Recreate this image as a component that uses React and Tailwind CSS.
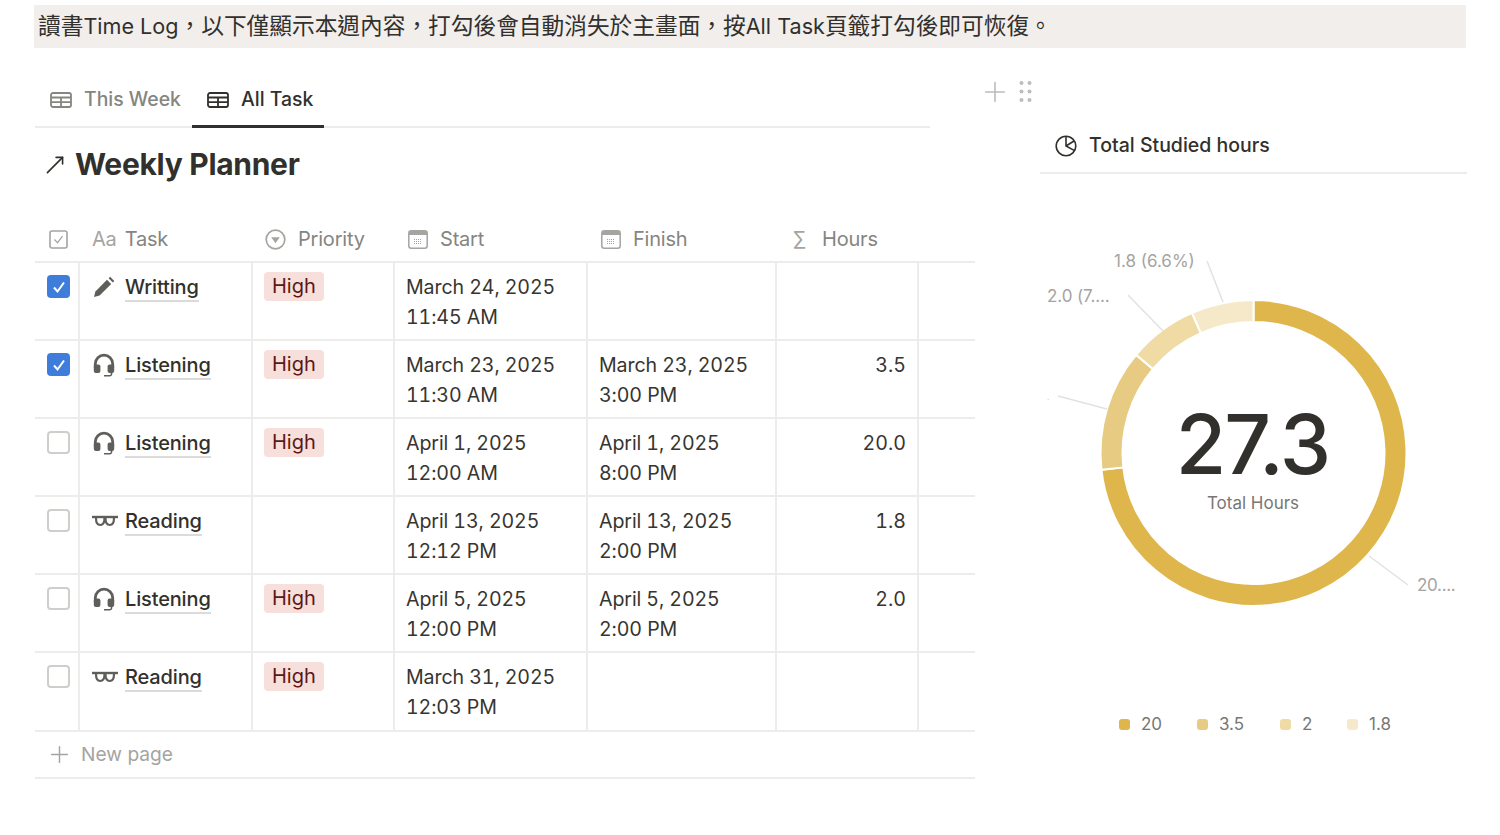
import { Plus, MoveUpRight } from "lucide-react";

const rows = [
  { done: true, icon: "pencil", task: "Writting", high: true, start: ["March 24, 2025", "11:45 AM"], finish: null, hours: "" },
  { done: true, icon: "headphones", task: "Listening", high: true, start: ["March 23, 2025", "11:30 AM"], finish: ["March 23, 2025", "3:00 PM"], hours: "3.5" },
  { done: false, icon: "headphones", task: "Listening", high: true, start: ["April 1, 2025", "12:00 AM"], finish: ["April 1, 2025", "8:00 PM"], hours: "20.0" },
  { done: false, icon: "glasses", task: "Reading", high: false, start: ["April 13, 2025", "12:12 PM"], finish: ["April 13, 2025", "2:00 PM"], hours: "1.8" },
  { done: false, icon: "headphones", task: "Listening", high: true, start: ["April 5, 2025", "12:00 PM"], finish: ["April 5, 2025", "2:00 PM"], hours: "2.0" },
  { done: false, icon: "glasses", task: "Reading", high: true, start: ["March 31, 2025", "12:03 PM"], finish: null, hours: "" },
];

const legend = [
  { label: "20", color: "bg-[#dfb64b]", width: "w-[78px]" },
  { label: "3.5", color: "bg-[#e8cb82]", width: "w-[83px]" },
  { label: "2", color: "bg-[#f0dba5]", width: "w-[67px]" },
  { label: "1.8", color: "bg-[#f6e9c9]", width: "w-[45px]" },
];

const TableIcon = ({ className }) => (
  <svg viewBox="0 0 22 16" className={className} fill="none" stroke="currentColor" strokeWidth="1.8">
    <rect x="1" y="1" width="20" height="14" rx="2" />
    <path d="M1 5.5h20M1 10.2h20M11 5.5V15" />
  </svg>
);

const CalendarIcon = () => (
  <svg viewBox="0 0 20 19" className="w-[20px] h-[19px]">
    <rect x="0.8" y="0.8" width="18.4" height="17.4" rx="2.5" fill="#fff" stroke="#a5a4a1" strokeWidth="1.5" />
    <path d="M1 3.2a2.2 2.2 0 0 1 2.2-2.2h13.6a2.2 2.2 0 0 1 2.2 2.2V5H1z" fill="#a5a4a1" />
    <path d="M6 9.5h8M6 11.5h8M6 13.5h8" stroke="#a5a4a1" strokeWidth="1" strokeDasharray="1 1" />
  </svg>
);

const TaskIcon = ({ name }) => {
  if (name === "pencil") {
    return (
      <svg viewBox="0 0 22 22" className="w-[22px] h-[22px] text-[#5f5e5b]" fill="currentColor">
        <path d="M1 21l1.4-5.6L14 3.8l4.2 4.2L6.6 19.6z" />
        <path d="M15.6 2.2l1.5-1.5 4.2 4.2-1.5 1.5z" />
      </svg>
    );
  }
  if (name === "headphones") {
    return (
      <svg viewBox="0 0 22 24" className="w-[22px] h-[24px] text-[#5f5e5b]" fill="none">
        <path d="M2.3 15v-4.2a8.7 8.7 0 0 1 17.4 0V15" stroke="currentColor" strokeWidth="2.8" />
        <rect x="0.8" y="11.5" width="6.6" height="8.5" rx="2" fill="currentColor" />
        <rect x="14.6" y="11.5" width="6.6" height="8.5" rx="2" fill="currentColor" />
        <path d="M18.5 19.5v1.5a1.8 1.8 0 0 1-1.8 1.8H11" stroke="currentColor" strokeWidth="1.6" />
      </svg>
    );
  }
  return (
    <svg viewBox="0 0 26 12" className="-ml-[1px] w-[26px] h-[12px] text-[#5f5e5b]" fill="none" stroke="currentColor">
      <path d="M0 2h26" strokeWidth="2.4" />
      <path d="M4 3c0 4 1.2 7 4.2 7s4.3-3 4.3-7M13.5 3c0 4 1.3 7 4.3 7s4.2-3 4.2-7" strokeWidth="2.2" />
    </svg>
  );
};

const Checkbox = ({ checked }) =>
  checked ? (
    <div className="w-[23px] h-[23px] rounded-[4px] bg-[#3f7ddb] flex items-center justify-center">
      <svg viewBox="0 0 14 14" className="w-[14px] h-[14px]" fill="none" stroke="#fff" strokeWidth="2">
        <path d="M2 7.5l3.5 4L12 2.5" />
      </svg>
    </div>
  ) : (
    <div className="w-[23px] h-[23px] rounded-[4px] border-2 border-[#cfcecb] bg-white" />
  );

const HeaderCell = ({ icon, label, className }) => (
  <div className={`flex items-center text-[20px] tracking-[-0.2px] text-[#86857f] ${className}`}>
    {icon}
    <span>{label}</span>
  </div>
);

const DateCell = ({ lines, className }) => (
  <div className={`pl-[11px] pt-[9px] text-[19.6px] leading-[30px] tabular-nums tracking-[-0.1px] text-[#37352f] border-r-2 border-[#ececea] ${className}`}>
    {lines && lines.map((line) => <div key={line}>{line}</div>)}
  </div>
);

function polar(r, deg) {
  const a = ((deg - 90) * Math.PI) / 180;
  return [1253.5 + r * Math.cos(a), 453 + r * Math.sin(a)];
}

function arc(from, to) {
  const [x1, y1] = polar(153, from);
  const [x2, y2] = polar(153, to);
  const [x3, y3] = polar(131, to);
  const [x4, y4] = polar(131, from);
  const large = to - from > 180 ? 1 : 0;
  return `M${x1} ${y1}A153 153 0 ${large} 1 ${x2} ${y2}L${x3} ${y3}A131 131 0 ${large} 0 ${x4} ${y4}Z`;
}

const Donut = () => (
  <svg viewBox="1040 174 427 530" className="w-[427px] h-[530px]">
    <path d={arc(0, 263.7)} fill="#dfb64b" stroke="#fff" strokeWidth="2" />
    <path d={arc(263.7, 309.9)} fill="#e8cb82" stroke="#fff" strokeWidth="2" />
    <path d={arc(309.9, 336.3)} fill="#f0dba5" stroke="#fff" strokeWidth="2" />
    <path d={arc(336.3, 360)} fill="#f6e9c9" stroke="#fff" strokeWidth="2" />
    <path d="M1369 556l39 29M1107 409l-49-13M1163 331l-35-36M1223 302l-16-41" stroke="#e3e2e0" strokeWidth="1.5" fill="none" />
    <text x="1417" y="591" fontSize="17" letterSpacing="-0.3" fill="#a5a4a1">20....</text>
    <text x="1047" y="302" fontSize="17" letterSpacing="-0.1" fill="#a5a4a1">2.0 (7....</text>
    <text x="1047" y="400" fontSize="8" fill="#c9c8c5">.</text>
    <text x="1114" y="267" fontSize="17" fill="#a5a4a1">1.8 (6.6%)</text>
    <text x="1252.5" y="474" fontSize="82" fontWeight="500" fill="#32302c" textAnchor="middle" letterSpacing="-2">27.3</text>
    <text x="1253" y="509" fontSize="17" fill="#787774" textAnchor="middle">Total Hours</text>
  </svg>
);

export default function App() {
  return (
    <div className="w-[1500px] h-[835px] overflow-hidden bg-white pt-[5px] font-['Inter','Noto_Sans_CJK_TC',sans-serif] text-[#37352f]">
      <div className="mx-[34px] h-[43px] bg-[#f1eeec] pl-[4px] flex items-center text-[22.7px] text-[#32302c] whitespace-nowrap">
        <p>
          讀書<span className="text-[21.6px]">Time Log</span>
          {"\uFF0C以下僅顯示本週內容\uFF0C打勾後會自動消失於主畫面\uFF0C按"}
          <span className="text-[21.6px]">All Task</span>
          頁籤打勾後即可恢復。
        </p>
      </div>

      <div className="flex pl-[35px]">
        <div className="w-[940px]">
          <div className="w-[895px] mt-[24px] h-[56px] flex border-b-2 border-[#ececea] text-[19.4px] font-medium">
            <div className="w-[157px] pl-[15px] pt-[2px] flex items-center gap-[12px] text-[#86857f]">
              <TableIcon className="w-[22px] h-[16px]" />
              <span>This Week</span>
            </div>
            <div className="w-[132px] h-[56px] pl-[15px] pt-[2px] flex items-center gap-[12px] text-[#32302c] border-b-[3px] border-[#32302c]">
              <TableIcon className="w-[22px] h-[16px]" />
              <span>All Task</span>
            </div>
          </div>

          <div className="h-[73px] flex items-center pl-[7px] gap-[7px]">
            <MoveUpRight size={26} strokeWidth={1.5} className="text-[#32302c]" />
            <h1 className="text-[30px] font-bold text-[#32302c] tracking-[-0.3px]">Weekly Planner</h1>
          </div>

          <div className="h-[46px] mt-[16px] flex border-b-2 border-[#ececea]">
            <div className="w-[45px] flex items-center pl-[14px]">
              <svg viewBox="0 0 19 19" className="w-[19px] h-[19px]" fill="none" stroke="#a5a4a1">
                <rect x="1" y="1" width="17" height="17" rx="2" strokeWidth="1.6" />
                <path d="M5.5 9.5l3 3.2 5-6.5" strokeWidth="1.2" />
              </svg>
            </div>
            <HeaderCell
              className="w-[173px]"
              icon={<span className="text-[#a5a4a1] ml-[12px] mr-[8px]">Aa</span>}
              label="Task"
            />
            <HeaderCell
              className="w-[142px] pl-[12px] gap-[12px]"
              icon={
                <svg viewBox="0 0 21 21" className="w-[21px] h-[21px]" fill="none">
                  <circle cx="10.5" cy="10.5" r="9.3" stroke="#a5a4a1" strokeWidth="1.7" />
                  <path d="M6.2 8.2h8.6l-4.3 6z" fill="#a5a4a1" />
                </svg>
              }
              label="Priority"
            />
            <HeaderCell className="w-[193px] pl-[13px] gap-[12px]" icon={<CalendarIcon />} label="Start" />
            <HeaderCell className="w-[189px] pl-[13px] gap-[12px]" icon={<CalendarIcon />} label="Finish" />
            <HeaderCell
              className="w-[142px] pl-[15px] gap-[15px]"
              icon={<span className="text-[#a5a4a1] w-[15px] text-center">∑</span>}
              label="Hours"
            />
          </div>

          <div>
            {rows.map((row, i) => (
              <div key={i} className="h-[78px] last:h-[79px] flex border-b-2 border-[#ececea]">
                <div className="w-[45px] pt-[12px] pl-[12px] border-r-2 border-[#ececea]">
                  <Checkbox checked={row.done} />
                </div>
                <div className="w-[173px] pt-[9px] pl-[13px] flex items-start border-r-2 border-[#ececea] text-[20px] leading-[30px]">
                  <span className="w-[32px] h-[30px] flex items-center">
                    <TaskIcon name={row.icon} />
                  </span>
                  <span className="mt-[3px] font-medium tracking-[-0.15px] text-[#32302c] border-b-2 border-[#dcdbd9] leading-[25px]">{row.task}</span>
                </div>
                <div className="w-[142px] pt-[9px] pl-[11px] border-r-2 border-[#ececea]">
                  {row.high && (
                    <span className="inline-block h-[29px] px-[8px] rounded-[4px] bg-[#f7dfdb] text-[#5d1715] text-[20px] leading-[29px]">
                      High
                    </span>
                  )}
                </div>
                <DateCell lines={row.start} className="w-[193px]" />
                <DateCell lines={row.finish} className="w-[189px]" />
                <div className="w-[142px] pr-[11px] pt-[9px] text-right text-[19.6px] leading-[30px] tabular-nums border-r-2 border-[#ececea]">
                  {row.hours}
                </div>
              </div>
            ))}
          </div>

          <div className="h-[47px] pl-[11px] flex items-center gap-[8px] border-b-2 border-[#ececea] text-[19.2px] text-[#a5a4a1]">
            <Plus size={27} strokeWidth={1.3} />
            <span>New page</span>
          </div>
        </div>

        <div className="w-[65px] pt-[28px] pl-[4px] flex items-start gap-[8px]">
          <Plus size={32} strokeWidth={1.2} className="text-[#bdbcb9]" />
          <svg viewBox="0 0 13 23" className="mt-[4px] w-[13px] h-[23px]" fill="#bdbcb9">
            <circle cx="2.5" cy="3" r="2" /><circle cx="10.5" cy="3" r="2" />
            <circle cx="2.5" cy="11.5" r="2" /><circle cx="10.5" cy="11.5" r="2" />
            <circle cx="2.5" cy="20" r="2" /><circle cx="10.5" cy="20" r="2" />
          </svg>
        </div>

        <div className="w-[427px]">
          <div className="mt-[76px] h-[50px] pl-[15px] pb-[4px] flex items-center gap-[12px] border-b-2 border-[#ececea] text-[19.5px] font-medium text-[#32302c]">
            <svg viewBox="0 0 22 22" className="w-[22px] h-[22px]" fill="none" stroke="#32302c" strokeWidth="1.6">
              <circle cx="11" cy="11" r="9.8" />
              <path d="M11 1.2V11l8.6 4.6M11 11l8-5" />
            </svg>
            <span>Total Studied hours</span>
          </div>
          <Donut />
          <div className="mt-[8px] pl-[79px] flex items-center text-[17px] text-[#787774]">
            {legend.map((item) => (
              <div key={item.label} className={`flex items-center gap-[11px] ${item.width}`}>
                <span className={`w-[11px] h-[11px] rounded-[3px] ${item.color}`} />
                <span>{item.label}</span>
              </div>
            ))}
          </div>
        </div>
      </div>
    </div>
  );
}
